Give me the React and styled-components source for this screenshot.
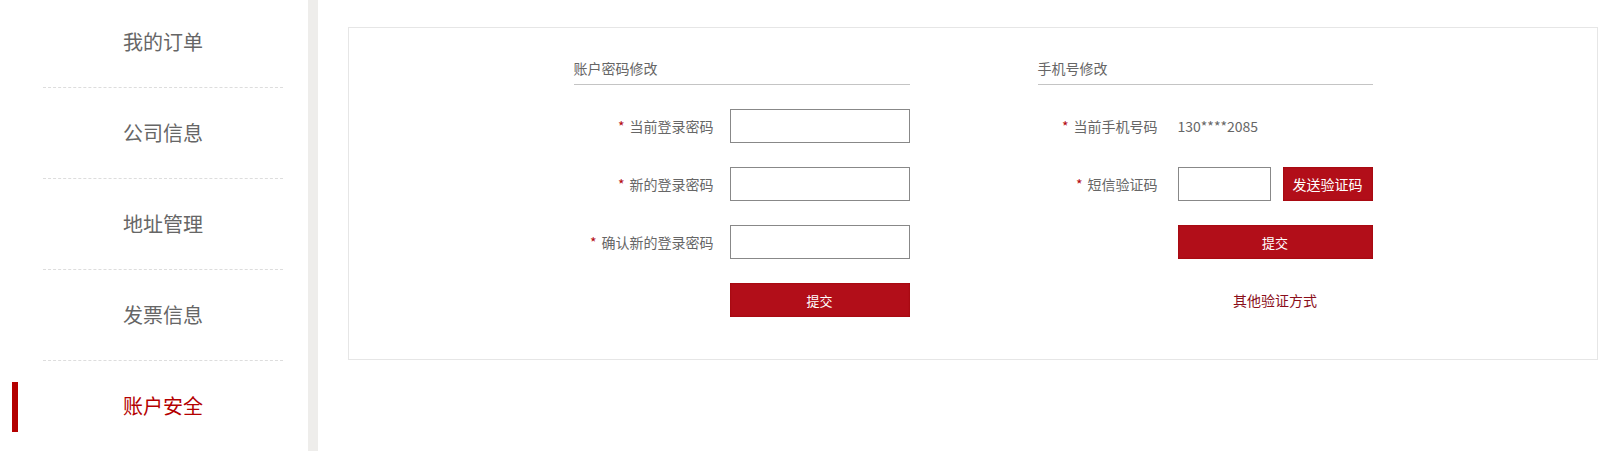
import React from 'react'
import styled, { createGlobalStyle } from 'styled-components'

const GlobalStyle = createGlobalStyle`
  body {
    margin: 0;
    background: #fff;
    font-family: "Noto Sans CJK SC", "Noto Sans", sans-serif;
  }
  * { box-sizing: border-box; }
`

const Page = styled.div`
  display: flex;
  width: 100vw;
  height: 100vh;
  overflow: hidden;
`

const Sidebar = styled.div`
  width: 318px;
  flex-shrink: 0;
  border-right: 10px solid #eeedeb;
  padding-left: 43px;
`

const NavList = styled.ul`
  list-style: none;
  margin: -3px 0 0;
  padding: 0;
  width: 240px;
`

const NavItem = styled.li`
  position: relative;
  height: 91px;
  line-height: 90px;
  text-align: center;
  font-size: 20px;
  color: ${({ active }) => (active ? '#b40000' : '#666')};
  border-bottom: ${({ active }) => (active ? 'none' : '1px dashed #ddd')};

  &::before {
    content: '';
    display: ${({ active }) => (active ? 'block' : 'none')};
    position: absolute;
    left: -31px;
    top: 21px;
    width: 6px;
    height: 50px;
    background: #b40000;
  }
`

const Main = styled.div`
  flex: 1;
  padding: 27px 9px 0 30px;
`

const Panel = styled.div`
  height: 333px;
  border: 1px solid #e6e6e6;
  display: flex;
  justify-content: center;
  gap: 128px;
  padding-top: 30px;
`

const Column = styled.div`
  width: ${({ w }) => w}px;
  display: flex;
  flex-direction: column;
  gap: 24px;
`

const Heading = styled.div`
  font-size: 14px;
  line-height: 20px;
  color: #666;
  padding-bottom: 6px;
  border-bottom: 1px solid #c4c4c4;
`

const Row = styled.div`
  display: flex;
  align-items: center;
  height: 34px;
  gap: ${({ gap }) => gap}px;
`

const Label = styled.label`
  width: ${({ w }) => w}px;
  flex-shrink: 0;
  text-align: right;
  font-size: 14px;
  color: #666;
`

const Star = styled.span`
  color: #b40a12;
  margin-right: 5px;
`

const Input = styled.input`
  width: ${({ w }) => w}px;
  height: 34px;
  border: 1px solid #888;
  padding: 0 6px;
  font-size: 14px;
  outline: none;
`

const Value = styled.span`
  font-size: 14px;
  color: #666;
`

const Button = styled.button`
  width: ${({ w }) => w}px;
  height: 34px;
  border: none;
  background: #b20e19;
  box-shadow: inset 0 0 2px #900000;
  color: #fff;
  font-family: inherit;
  font-size: ${({ small }) => (small ? 13 : 14)}px;
  cursor: pointer;
`

const Controls = styled.div`
  display: flex;
  gap: 12px;
`

const LinkRow = styled.div`
  height: 34px;
  display: flex;
  align-items: center;
  justify-content: center;
  padding-left: 140px;
`

const Link = styled.a`
  font-size: 14px;
  color: #8a0e1a;
  text-decoration: none;
`

const navs = ['我的订单', '公司信息', '地址管理', '发票信息', '账户安全']

const App = () => (
  <Page>
    <GlobalStyle />
    <Sidebar>
      <NavList>
        {navs.map((n, i) => (
          <NavItem key={n} active={i === navs.length - 1}>{n}</NavItem>
        ))}
      </NavList>
    </Sidebar>
    <Main>
      <Panel>
        <Column w={336}>
          <Heading>账户密码修改</Heading>
          <Row gap={16}>
            <Label w={140}><Star>*</Star>当前登录密码</Label>
            <Input w={180} type='password' />
          </Row>
          <Row gap={16}>
            <Label w={140}><Star>*</Star>新的登录密码</Label>
            <Input w={180} type='password' />
          </Row>
          <Row gap={16}>
            <Label w={140}><Star>*</Star>确认新的登录密码</Label>
            <Input w={180} type='password' />
          </Row>
          <Row gap={16}>
            <Label w={140} />
            <Button w={180} small>提交</Button>
          </Row>
        </Column>
        <Column w={335}>
          <Heading>手机号修改</Heading>
          <Row gap={20}>
            <Label w={120}><Star>*</Star>当前手机号码</Label>
            <Value>130****2085</Value>
          </Row>
          <Row gap={20}>
            <Label w={120}><Star>*</Star>短信验证码</Label>
            <Controls>
              <Input w={93} />
              <Button w={90}>发送验证码</Button>
            </Controls>
          </Row>
          <Row gap={20}>
            <Label w={120} />
            <Button w={195} small>提交</Button>
          </Row>
          <LinkRow>
            <Link href='#'>其他验证方式</Link>
          </LinkRow>
        </Column>
      </Panel>
    </Main>
  </Page>
)

export default App
